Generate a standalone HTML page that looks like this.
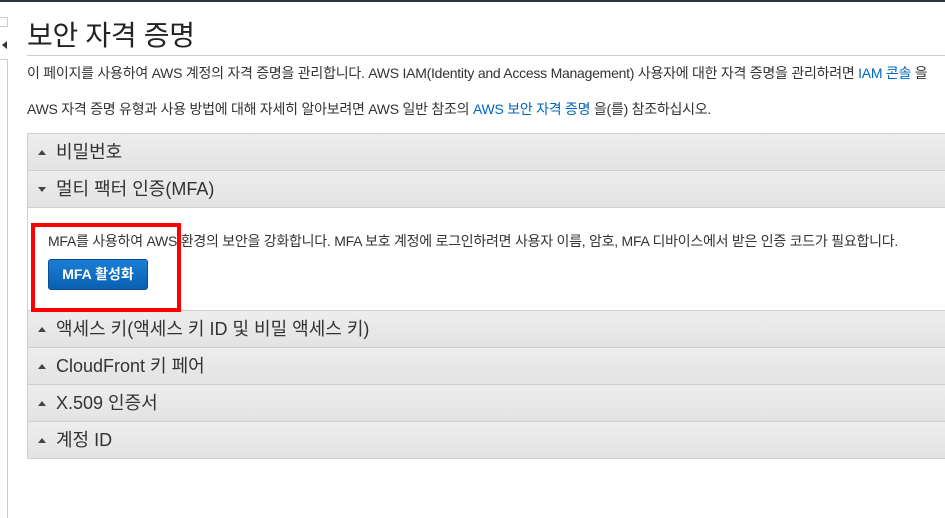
<!DOCTYPE html>
<html><head><meta charset="utf-8">
<style>
*{margin:0;padding:0;box-sizing:border-box}
body{width:945px;height:518px;overflow:hidden;background:#fff;font-family:"Liberation Sans","Noto Sans CJK KR",sans-serif;color:#333;position:relative}
.topbar{position:absolute;left:0;top:0;width:945px;height:2px;background:#2b3440}
.sb1{position:absolute;left:0;top:17px;width:8px;height:10px;border:1px solid #ccc;border-left:none}
.sbarrow{position:absolute;left:2px;top:41px;width:0;height:0;border-top:4px solid transparent;border-bottom:4px solid transparent;border-right:5px solid #333}
.sbline{position:absolute;left:7px;top:60px;width:1px;height:458px;background:#ccc}
.sbline0{position:absolute;left:0;top:59px;width:8px;height:1px;background:#ccc}
h1{position:absolute;left:27px;top:14px;font-size:28px;font-weight:normal;color:#222;letter-spacing:-0.3px}
.hr{position:absolute;left:27px;top:55px;width:918px;height:1px;background:#ccc}
.p{position:absolute;left:27px;font-size:14px;white-space:nowrap;color:#333;letter-spacing:-0.25px}
a{color:#0066c0;text-decoration:none}
.row{position:absolute;left:27px;width:918px;height:38px;background:linear-gradient(#ededed,#e3e3e3);border-top:1px solid #cfcfcf;border-left:1px solid #cfcfcf;font-size:18px;color:#333;line-height:36px;padding-left:28px}
.row:before{content:"";position:absolute;left:10px;top:16px;border-left:4px solid transparent;border-right:4px solid transparent;border-bottom:5px solid #444}
.row.open:before{border-bottom:none;border-top:5px solid #444}
.content{position:absolute;left:27px;top:207px;width:918px;height:103px;border-left:1px solid #cfcfcf;border-top:1px solid #cfcfcf}
.ct{position:absolute;left:48px;top:231px;font-size:14px;white-space:nowrap;color:#333;letter-spacing:-0.25px}
.btn{position:absolute;left:48px;top:259px;width:100px;height:31px;background:linear-gradient(#1a7fd6,#0a5fb0);border:1px solid #0a4f96;border-radius:3px;color:#fff;font-size:14px;font-weight:bold;text-align:center;line-height:29px}
.red{position:absolute;left:31px;top:223px;width:150px;height:89px;border:4px solid #ff0000}
.bottom{position:absolute;left:27px;top:458px;width:918px;height:1px;background:#cfcfcf}
</style></head><body>
<div class="topbar"></div>
<div class="sb1"></div>
<div class="sbarrow"></div>
<div class="sbline0"></div>
<div class="sbline"></div>
<h1>보안 자격 증명</h1>
<div class="hr"></div>
<div class="p" style="top:63px">이 페이지를 사용하여 AWS 계정의 자격 증명을 관리합니다. AWS IAM(Identity and Access Management) 사용자에 대한 자격 증명을 관리하려면 <a>IAM 콘솔</a> 을</div>
<div class="p" style="top:99px">AWS 자격 증명 유형과 사용 방법에 대해 자세히 알아보려면 AWS 일반 참조의 <a>AWS 보안 자격 증명</a> 을(를) 참조하십시오.</div>
<div class="row" style="top:133px">비밀번호</div>
<div class="row open" style="top:170px">멀티 팩터 인증(MFA)</div>
<div class="content"></div>
<div class="ct">MFA를 사용하여 AWS 환경의 보안을 강화합니다. MFA 보호 계정에 로그인하려면 사용자 이름, 암호, MFA 디바이스에서 받은 인증 코드가 필요합니다.</div>
<div class="btn">MFA 활성화</div>
<div class="row" style="top:310px">액세스 키(액세스 키 ID 및 비밀 액세스 키)</div>
<div class="row" style="top:347px">CloudFront 키 페어</div>
<div class="row" style="top:384px">X.509 인증서</div>
<div class="row" style="top:421px">계정 ID</div>
<div class="bottom"></div>
<div class="red"></div>
</body></html>
